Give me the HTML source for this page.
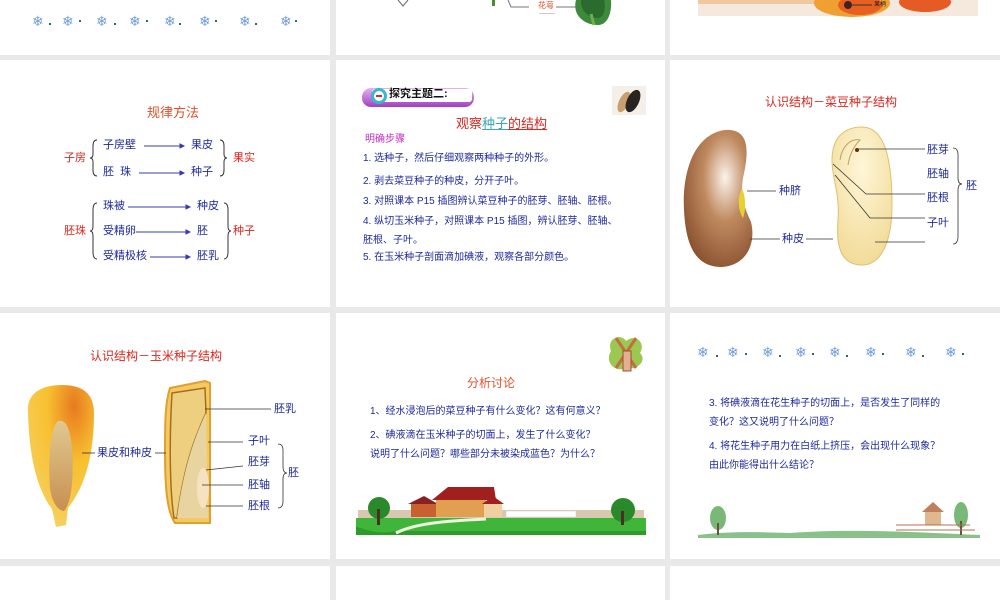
<!DOCTYPE html>
<html><head><meta charset="utf-8">
<style>
*{margin:0;padding:0;box-sizing:border-box}
body{width:1000px;height:600px;background:#e9e9e9;position:relative;overflow:hidden;font-family:"Liberation Sans","Noto Sans CJK SC",sans-serif}
.s{position:absolute;background:#fff}
.t{position:absolute;white-space:nowrap;line-height:1}
.b{color:#1f2a9c;font-size:11px}
.r{color:#d9261f}
.o{color:#e2502a}
.sf{position:absolute;color:#6f9ddc;font-size:14px;line-height:1}
.dt{position:absolute;width:2px;height:2px;background:#2f6a6a}
</style></head><body>
<div class="s" style="left:0;top:0;width:330px;height:55px"></div>
<div class="s" style="left:336px;top:0;width:329px;height:55px"></div>
<div class="s" style="left:670px;top:0;width:330px;height:55px"></div>
<div class="s" style="left:0;top:60px;width:330px;height:247px"></div>
<div class="s" style="left:336px;top:60px;width:329px;height:247px"></div>
<div class="s" style="left:670px;top:60px;width:330px;height:247px"></div>
<div class="s" style="left:0;top:313px;width:330px;height:246px"></div>
<div class="s" style="left:336px;top:313px;width:329px;height:246px"></div>
<div class="s" style="left:670px;top:313px;width:330px;height:246px"></div>
<div class="s" style="left:0;top:566px;width:330px;height:34px"></div>
<div class="s" style="left:336px;top:566px;width:329px;height:34px"></div>
<div class="s" style="left:670px;top:566px;width:330px;height:34px"></div>

<div class="sf" style="left:32px;top:14px">❄</div><div class="dt" style="left:49px;top:23px"></div>
<div class="sf" style="left:62px;top:14px">❄</div><div class="dt" style="left:79px;top:20px"></div>
<div class="sf" style="left:96px;top:14px">❄</div><div class="dt" style="left:114px;top:23px"></div>
<div class="sf" style="left:129px;top:14px">❄</div><div class="dt" style="left:146px;top:20px"></div>
<div class="sf" style="left:164px;top:14px">❄</div><div class="dt" style="left:179px;top:23px"></div>
<div class="sf" style="left:199px;top:14px">❄</div><div class="dt" style="left:215px;top:20px"></div>
<div class="sf" style="left:239px;top:14px">❄</div><div class="dt" style="left:255px;top:23px"></div>
<div class="sf" style="left:280px;top:14px">❄</div><div class="dt" style="left:295px;top:20px"></div>

<svg style="position:absolute;left:336px;top:0" width="329" height="55">
<path d="M62 0 L67 6 L72 0" fill="none" stroke="#666"/>
<rect x="156" y="0" width="3" height="6" fill="#4a8a30"/>
<path d="M172 0 L175 7 L193 7" fill="none" stroke="#777"/>
<path d="M220 7 L250 7" stroke="#777"/>
<path d="M240 0 C236 15 248 25 262 25 C272 25 276 12 275 0 Z" fill="#3e8a3c"/>
<path d="M245 0 C244 10 252 18 262 18 C268 18 270 8 268 0 Z" fill="#2b6b2e"/>
<path d="M255 14 L258 25" stroke="#6ab04c" stroke-width="3"/>
<rect x="203" y="13" width="16" height="1" fill="#ccc"/>
</svg>
<div class="t" style="left:538px;top:2px;font-size:8px;color:#e2502a">花萼</div>

<svg style="position:absolute;left:670px;top:0" width="330" height="55">
<rect x="28" y="0" width="280" height="16" fill="#f5e8dc"/>
<rect x="28" y="0" width="130" height="4" fill="#f0c8a0"/>
<ellipse cx="182" cy="3" rx="38" ry="14" fill="#f0a030"/>
<ellipse cx="190" cy="5" rx="22" ry="10" fill="#e86020"/>
<ellipse cx="255" cy="2" rx="26" ry="10" fill="#e65a25"/>
<circle cx="178" cy="5" r="4" fill="#402020"/>
<line x1="180" y1="5" x2="202" y2="5" stroke="#333"/>
</svg>
<div class="t" style="left:874px;top:2px;font-size:6px;color:#222">果柄</div>

<div class="t o" style="left:147px;top:106px;font-size:13px">规律方法</div>
<div class="t r" style="left:64px;top:153px;font-size:11px">子房</div>
<div class="t b" style="left:103px;top:140px">子房壁</div>
<div class="t b" style="left:103px;top:167px">胚&nbsp;&nbsp;珠</div>
<div class="t b" style="left:191px;top:140px">果皮</div>
<div class="t b" style="left:191px;top:167px">种子</div>
<div class="t r" style="left:233px;top:153px;font-size:11px">果实</div>
<div class="t r" style="left:64px;top:226px;font-size:11px">胚珠</div>
<div class="t b" style="left:103px;top:201px">珠被</div>
<div class="t b" style="left:103px;top:226px">受精卵</div>
<div class="t b" style="left:103px;top:251px">受精极核</div>
<div class="t b" style="left:197px;top:201px">种皮</div>
<div class="t b" style="left:197px;top:226px">胚</div>
<div class="t b" style="left:197px;top:251px">胚乳</div>
<div class="t r" style="left:233px;top:226px;font-size:11px">种子</div>
<svg style="position:absolute;left:0;top:60px" width="330" height="247">
<g stroke="#3a3ab0" fill="#3a3ab0" stroke-width="1">
<line x1="144" y1="86" x2="180" y2="86"/><path d="M180 84 L184 86 L180 88Z"/>
<line x1="139" y1="113" x2="180" y2="113"/><path d="M180 111 L184 113 L180 115Z"/>
<line x1="128" y1="147" x2="186" y2="147"/><path d="M186 145 L190 147 L186 149Z"/>
<line x1="136" y1="172" x2="186" y2="172"/><path d="M186 170 L190 172 L186 174Z"/>
<line x1="150" y1="197" x2="186" y2="197"/><path d="M186 195 L190 197 L186 199Z"/>
</g>
<g fill="none" stroke="#333" stroke-width="1">
<path d="M97 80 Q93 80 93 86 L93 94 Q93 98 90 98 Q93 98 93 102 L93 110 Q93 116 97 116"/>
<path d="M220 80 Q224 80 224 86 L224 94 Q224 98 227 98 Q224 98 224 102 L224 110 Q224 116 220 116"/>
<path d="M97 143 Q93 143 93 150 L93 166 Q93 171 90 171 Q93 171 93 176 L93 192 Q93 199 97 199"/>
<path d="M224 143 Q228 143 228 150 L228 166 Q228 171 231 171 Q228 171 228 176 L228 192 Q228 199 224 199"/>
</g>
</svg>

<svg style="position:absolute;left:336px;top:60px" width="329" height="247">
<defs><linearGradient id="pg" x1="0" y1="0" x2="0" y2="1"><stop offset="0" stop-color="#e8b0f0"/><stop offset="1" stop-color="#a040c0"/></linearGradient></defs>
<rect x="26" y="28" width="112" height="19" rx="9" fill="url(#pg)"/>
<rect x="36" y="29" width="100" height="13" rx="3" fill="#fff"/>
<circle cx="43" cy="36" r="8" fill="#3ab8c8"/><circle cx="43" cy="36" r="5" fill="#fff"/>
<path d="M40 36 L46 36" stroke="#d03030" stroke-width="2"/>
<rect x="276" y="26" width="34" height="29" fill="#f4efe8"/>
<ellipse cx="288" cy="42" rx="5" ry="11" transform="rotate(25 288 42)" fill="#c8a070"/>
<ellipse cx="297" cy="41" rx="6" ry="12" transform="rotate(25 297 41)" fill="#2a2420"/>
</svg>
<div class="t" style="left:389px;top:89px;font-size:11px;font-weight:bold;color:#111">探究主题二:</div>
<div class="t" style="left:456px;top:117px;font-size:13px"><span class="r">观察</span><span style="color:#3aa8b0;text-decoration:underline">种子</span><span class="r" style="text-decoration:underline">的结构</span></div>
<div class="t" style="left:365px;top:135px;font-size:10px;color:#c030c0">明确步骤</div>
<div class="t b" style="left:363px;top:154px;font-size:10px">1. 选种子，然后仔细观察两种种子的外形。</div>
<div class="t b" style="left:363px;top:177px;font-size:10px">2. 剥去菜豆种子的种皮，分开子叶。</div>
<div class="t b" style="left:363px;top:197px;font-size:10px">3. 对照课本 P15 插图辨认菜豆种子的胚芽、胚轴、胚根。</div>
<div class="t b" style="left:363px;top:217px;font-size:10px">4. 纵切玉米种子，对照课本 P15 插图，辨认胚芽、胚轴、</div>
<div class="t b" style="left:363px;top:236px;font-size:10px">胚根、子叶。</div>
<div class="t b" style="left:363px;top:253px;font-size:10px">5. 在玉米种子剖面滴加碘液，观察各部分颜色。</div>

<div class="t r" style="left:765px;top:96px;font-size:12px">认识结构－菜豆种子结构</div>
<svg style="position:absolute;left:670px;top:60px" width="330" height="247">
<defs><radialGradient id="bn" cx="0.6" cy="0.35" r="0.7"><stop offset="0" stop-color="#fbf3ec"/><stop offset="0.45" stop-color="#c08a60"/><stop offset="1" stop-color="#8a5230"/></radialGradient>
<radialGradient id="bn2" cx="0.5" cy="0.3" r="0.8"><stop offset="0" stop-color="#fff6d8"/><stop offset="1" stop-color="#f0d890"/></radialGradient></defs>
<path d="M55 70 C25 74 12 110 14 150 C16 190 28 207 52 207 C78 205 86 182 81 162 C75 148 70 138 73 118 C78 96 82 68 55 70Z" fill="url(#bn)"/>
<path d="M72 128 C67 138 68 150 73 158 C76 150 76 138 72 128Z" fill="#e8d030"/>
<path d="M192 67 C172 67 162 80 162 100 C162 120 170 132 168 160 C166 185 170 205 192 205 C212 205 222 180 222 145 C222 100 215 67 192 67Z" fill="url(#bn2)" stroke="#e0c070"/>
<path d="M170 100 C172 85 182 78 190 80 C185 85 180 92 178 105" fill="none" stroke="#c0a060"/>
<circle cx="187" cy="90" r="2" fill="#603010"/>
<g stroke="#333" stroke-width="0.8" fill="none">
<line x1="188" y1="89" x2="255" y2="89"/>
<path d="M163 104 L196 134 L255 134"/>
<path d="M165 115 L200 158 L255 158"/>
<line x1="205" y1="182" x2="255" y2="182"/>
<line x1="77" y1="131" x2="106" y2="131"/>
<line x1="80" y1="179" x2="110" y2="179"/>
<line x1="136" y1="179" x2="163" y2="179"/>
<path d="M283 88 Q288 88 288 95 L288 118 Q288 124 292 124 Q288 124 288 130 L288 176 Q288 184 283 184"/>
</g>
</svg>
<div class="t b" style="left:927px;top:145px">胚芽</div>
<div class="t b" style="left:927px;top:169px">胚轴</div>
<div class="t b" style="left:927px;top:193px">胚根</div>
<div class="t b" style="left:927px;top:218px">子叶</div>
<div class="t b" style="left:966px;top:181px">胚</div>
<div class="t b" style="left:779px;top:186px">种脐</div>
<div class="t b" style="left:782px;top:234px">种皮</div>

<div class="t r" style="left:90px;top:350px;font-size:12px">认识结构－玉米种子结构</div>
<svg style="position:absolute;left:0;top:313px" width="330" height="246">
<defs><radialGradient id="cn" cx="0.7" cy="0.15" r="0.9"><stop offset="0" stop-color="#e87a20"/><stop offset="0.45" stop-color="#f8c030"/><stop offset="1" stop-color="#f6d060"/></radialGradient>
<linearGradient id="ce" x1="0" y1="0" x2="0" y2="1"><stop offset="0" stop-color="#e0c890"/><stop offset="1" stop-color="#c89050"/></linearGradient></defs>
<path d="M28 100 C26 80 42 72 62 72 C82 72 94 80 94 100 C94 140 86 172 68 195 L66 212 L56 214 L52 196 C36 175 29 140 28 100Z" fill="url(#cn)"/>
<path d="M58 108 C50 115 48 150 50 175 C52 192 60 198 64 198 C72 190 74 160 72 135 C70 115 66 106 58 108Z" fill="url(#ce)"/>
<path d="M170 75 L205 68 L210 70 L210 210 L175 210 C168 200 165 180 165 140 C165 110 165 90 170 75Z" fill="#f5c860" stroke="#e0a030" stroke-width="2"/>
<path d="M172 80 L205 75 L206 100 C198 118 185 145 177 205 L174 205 C170 180 169 130 172 80Z" fill="#eecf80" stroke="#a07020" stroke-width="1.5"/>
<path d="M206 100 C198 118 185 145 177 205 L208 205 Z" fill="#e8d4a0"/>
<ellipse cx="203" cy="175" rx="6" ry="20" fill="#f6e2c0"/>
<g stroke="#333" stroke-width="0.8">
<line x1="205" y1="96" x2="271" y2="96"/>
<line x1="208" y1="129" x2="243" y2="129"/>
<line x1="206" y1="157" x2="243" y2="153"/>
<line x1="202" y1="172" x2="243" y2="172"/>
<line x1="206" y1="193" x2="243" y2="193"/>
<line x1="82" y1="140" x2="95" y2="140"/>
<line x1="155" y1="140" x2="166" y2="140"/>
</g>
<path d="M278 131 Q283 131 283 137 L283 153 Q283 160 287 160 Q283 160 283 166 L283 188 Q283 195 278 195" fill="none" stroke="#333" stroke-width="0.8"/>
</svg>
<div class="t b" style="left:274px;top:404px">胚乳</div>
<div class="t b" style="left:248px;top:436px">子叶</div>
<div class="t b" style="left:248px;top:457px">胚芽</div>
<div class="t b" style="left:248px;top:480px">胚轴</div>
<div class="t b" style="left:248px;top:501px">胚根</div>
<div class="t b" style="left:288px;top:468px">胚</div>
<div class="t b" style="left:97px;top:448px">果皮和种皮</div>

<svg style="position:absolute;left:336px;top:313px" width="329" height="246">
<path d="M275 38 C270 25 285 20 290 28 C300 20 310 30 304 40 C312 48 300 58 290 55 C280 60 268 50 275 38Z" fill="#9ac850"/>
<path d="M280 25 L300 55 M300 25 L280 55" stroke="#c07040" stroke-width="3"/>
<rect x="287" y="38" width="8" height="20" fill="#e0b090" stroke="#a05030"/>
<rect x="22" y="197" width="286" height="22" fill="#d8c8b0"/>
<rect x="20" y="205" width="290" height="17" fill="#3fb53a"/>
<path d="M20 222 L310 222 L310 218 L60 218 C40 222 30 216 20 214Z" fill="#2f9a2a"/>
<path d="M60 220 C80 210 110 208 150 206" stroke="#f0f0e0" stroke-width="3" fill="none"/>
<rect x="75" y="190" width="25" height="14" fill="#c86030"/><path d="M72 191 L88 183 L102 191Z" fill="#8a2020"/>
<rect x="100" y="186" width="50" height="18" fill="#e0a050"/><path d="M96 187 L112 174 L158 174 L160 187Z" fill="#a02020"/>
<rect x="148" y="190" width="18" height="14" fill="#f0d0a0"/><path d="M146 191 L157 183 L168 191Z" fill="#a02020"/>
<rect x="170" y="198" width="70" height="6" fill="#fff" stroke="#ccc" stroke-width="0.5"/>
<circle cx="43" cy="195" r="11" fill="#2a8a2a"/><rect x="41" y="196" width="3" height="16" fill="#4a3020"/>
<circle cx="287" cy="197" r="12" fill="#2a8a2a"/><rect x="285" y="198" width="3" height="14" fill="#4a3020"/>
</svg>
<div class="t o" style="left:467px;top:377px;font-size:12px">分析讨论</div>
<div class="t b" style="left:370px;top:407px;font-size:10px">1、经水浸泡后的菜豆种子有什么变化？这有何意义？</div>
<div class="t b" style="left:370px;top:431px;font-size:10px">2、碘液滴在玉米种子的切面上，发生了什么变化？</div>
<div class="t b" style="left:370px;top:450px;font-size:10px">说明了什么问题？哪些部分未被染成蓝色？为什么？</div>

<div class="sf" style="left:697px;top:345px">❄</div><div class="dt" style="left:716px;top:355px"></div>
<div class="sf" style="left:727px;top:345px">❄</div><div class="dt" style="left:745px;top:353px"></div>
<div class="sf" style="left:762px;top:345px">❄</div><div class="dt" style="left:779px;top:355px"></div>
<div class="sf" style="left:795px;top:345px">❄</div><div class="dt" style="left:812px;top:353px"></div>
<div class="sf" style="left:829px;top:345px">❄</div><div class="dt" style="left:846px;top:355px"></div>
<div class="sf" style="left:865px;top:345px">❄</div><div class="dt" style="left:882px;top:353px"></div>
<div class="sf" style="left:905px;top:345px">❄</div><div class="dt" style="left:922px;top:355px"></div>
<div class="sf" style="left:945px;top:345px">❄</div><div class="dt" style="left:962px;top:353px"></div>
<div class="t b" style="left:709px;top:399px;font-size:10px">3. 将碘液滴在花生种子的切面上，是否发生了同样的</div>
<div class="t b" style="left:709px;top:418px;font-size:10px">变化？这又说明了什么问题？</div>
<div class="t b" style="left:709px;top:442px;font-size:10px">4. 将花生种子用力在白纸上挤压，会出现什么现象？</div>
<div class="t b" style="left:709px;top:461px;font-size:10px">由此你能得出什么结论？</div>
<svg style="position:absolute;left:670px;top:313px" width="330" height="246">
<path d="M28 222 C60 218 90 219 120 220 C170 216 230 218 310 222 L310 225 L28 225Z" fill="#8ac08a"/>
<ellipse cx="48" cy="205" rx="8" ry="12" fill="#7ab878"/><rect x="47" y="210" width="2" height="12" fill="#6a5040"/>
<ellipse cx="291" cy="202" rx="7" ry="13" fill="#7ab878"/><rect x="290" y="208" width="2" height="14" fill="#6a5040"/>
<rect x="255" y="198" width="16" height="14" fill="#e0b890"/><path d="M252 199 L263 189 L274 199Z" fill="#c08060"/>
<path d="M226 212 L300 212 M226 217 L305 217" stroke="#b07050"/>
</svg>
</body></html>
